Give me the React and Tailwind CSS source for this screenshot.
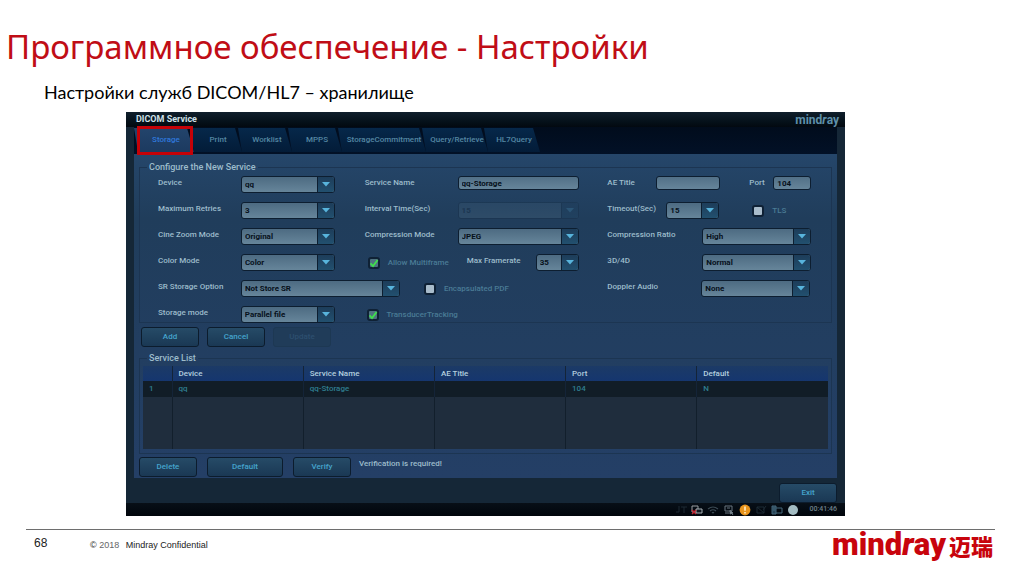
import { useState } from 'react';
import clsx from 'clsx';

const tabs = [
  { name: 'Storage', width: 'w-[60px]' },
  { name: 'Print', width: 'w-[52px]' },
  { name: 'Worklist', width: 'w-[54px]' },
  { name: 'MPPS', width: 'w-[54px]' },
  { name: 'StorageCommitment', width: 'w-[88px]' },
  { name: 'Query/Retrieve', width: 'w-[66px]' },
  { name: 'HL7Query', width: 'w-[56px]' },
];

const services = [{ device: 'qq', name: 'qq-Storage', ae: '', port: '104', isDefault: 'N' }];

const App = () => (
  <div className="flex min-h-screen flex-col bg-white">
    <header className="pt-6 font-['Noto_Sans',sans-serif]">
      <h1 className="pl-[6px] text-[33px] leading-[46px] text-[#c00d16]">Программное обеспечение - Настройки</h1>
      <p className="pl-11 pt-2 font-['Lato','Open_Sans',sans-serif] text-[18px] leading-7 text-black">
        Настройки служб DICOM/HL7 – хранилище
      </p>
    </header>
    <main className="ml-[126px] mr-[179px] mt-[6px]">
      <DicomService />
    </main>
    <Footer />
  </div>
);

const DicomService = () => {
  const [active, setActive] = useState('Storage');

  return (
    <section className="bg-[#152737] font-['Roboto',sans-serif] text-[8px] font-medium text-[#9dbccb]">
      <div className="flex h-[15px] items-center justify-between bg-linear-to-b from-[#101f2c] to-[#020910] pl-[10px] pr-[6px]">
        <h2 className="text-[9px] font-bold text-[#cfe0e8]">DICOM Service</h2>
        <span className="text-[12px] font-bold leading-[12px] text-[#5f90aa]">
          mind<i>r</i>ay
        </span>
      </div>

      <div className="mx-2">
        <div className="relative flex h-[27px] bg-linear-to-b from-[#010c1c] to-[#021127] pt-px" role="tablist">
          {tabs.map((tab) => (
            <button
              key={tab.name}
              type="button"
              role="tab"
              aria-selected={tab.name === active}
              onClick={() => setActive(tab.name)}
              className={clsx(
                '-mr-1 h-[24px] shrink-0 whitespace-nowrap pl-1 [clip-path:polygon(0_0,calc(100%-7px)_0,100%_100%,4px_100%)]',
                tab.width,
                tab.name === active
                  ? 'bg-linear-to-b from-[#23446c] to-[#1c3a60] text-[#2f78dc]'
                  : 'bg-linear-to-b from-[#06284a] to-[#031c38] text-[#5487a3]'
              )}
            >
              {tab.name}
            </button>
          ))}
          <div className="pointer-events-none absolute -top-px left-[3px] h-[29px] w-[56px] border-[3px] border-[#c40208]" />
        </div>

        <div className="h-[324px] bg-linear-to-b from-[#25466a] via-[#203d5b] via-20% to-[#243f66] px-[5px] pt-[7px]">
          <ConfigForm />
          <div className="mt-1 flex gap-2 pl-[2px]">
            <Button>Add</Button>
            <Button>Cancel</Button>
            <Button disabled>Update</Button>
          </div>
          <ServiceList />
          <div className="mt-[3px] flex gap-[10px]">
            <Button>Delete</Button>
            <Button wide>Default</Button>
            <Button>Verify</Button>
            <p className="-ml-[2px] leading-[14px]">Verification is required!</p>
          </div>
        </div>

        <div className="flex h-[25px] items-center justify-end pt-1">
          <Button>Exit</Button>
        </div>
      </div>
      <StatusBar />
    </section>
  );
};

const row = 'grid h-[26px] grid-cols-[83fr_124fr_93fr_150fr_224fr] items-start';

const ConfigForm = () => (
  <fieldset className="h-[162px] border border-[#1c3552] pl-[18px] pt-[3px]">
    <legend className="-ml-[11px] px-[2px] text-[9px] leading-[12px]">Configure the New Service</legend>
    <div className={row}>
      <Label htmlFor="device">Device</Label>
      <Select id="device" value="qq" width="w-[94px]" />
      <Label htmlFor="service">Service Name</Label>
      <TextBox id="service" value="qq-Storage" width="w-[121px]" />
      <div className="flex">
        <Label htmlFor="ae" width="w-[49px]">AE Title</Label>
        <TextBox id="ae" value="" width="w-[64px]" />
        <Label htmlFor="port" width="ml-[29px] w-[24px]">Port</Label>
        <TextBox id="port" value="104" width="w-[38px]" />
      </div>
    </div>
    <div className={row}>
      <Label htmlFor="retries">Maximum Retries</Label>
      <Select id="retries" value="3" width="w-[94px]" />
      <Label htmlFor="interval">Interval Time(Sec)</Label>
      <Select id="interval" value="15" width="w-[121px]" disabled />
      <div className="flex">
        <Label htmlFor="timeout" width="w-[59px]">Timeout(Sec)</Label>
        <Select id="timeout" value="15" width="w-[53px]" />
        <Check id="tls" label="TLS" className="ml-[33px]" />
      </div>
    </div>
    <div className={row}>
      <Label htmlFor="cine">Cine Zoom Mode</Label>
      <Select id="cine" value="Original" width="w-[94px]" />
      <Label htmlFor="compression">Compression Mode</Label>
      <Select id="compression" value="JPEG" width="w-[121px]" />
      <div className="flex">
        <Label htmlFor="ratio" width="w-[95px]">Compression Ratio</Label>
        <Select id="ratio" value="High" width="w-[109px]" />
      </div>
    </div>
    <div className={row}>
      <Label htmlFor="color">Color Mode</Label>
      <Select id="color" value="Color" width="w-[94px]" />
      <div className="col-span-2 flex">
        <Check id="multiframe" label="Allow Multiframe" className="ml-[3px] w-[99px]" checked />
        <Label htmlFor="framerate" width="w-[69px]">Max Framerate</Label>
        <Select id="framerate" value="35" width="w-[43px]" />
      </div>
      <div className="flex">
        <Label htmlFor="mode3d" width="w-[95px]">3D/4D</Label>
        <Select id="mode3d" value="Normal" width="w-[109px]" />
      </div>
    </div>
    <div className={row}>
      <Label htmlFor="sr">SR Storage Option</Label>
      <div className="col-span-3 flex">
        <Select id="sr" value="Not Store SR" width="w-[159px]" />
        <Check id="pdf" label="Encapsulated PDF" className="ml-[24px]" />
      </div>
      <div className="flex">
        <Label htmlFor="doppler" width="w-[94px]">Doppler Audio</Label>
        <Select id="doppler" value="None" width="w-[109px]" />
      </div>
    </div>
    <div className={row}>
      <Label htmlFor="mode">Storage mode</Label>
      <Select id="mode" value="Parallel file" width="w-[94px]" />
      <Check id="tracking" label="TransducerTracking" className="ml-[2px]" checked />
    </div>
  </fieldset>
);

const Label = ({ htmlFor, width = '', children }) => (
  <label htmlFor={htmlFor} className={clsx('shrink-0 whitespace-nowrap leading-[13px]', width)}>
    {children}
  </label>
);

const TextBox = ({ id, value, width }) => (
  <input
    id={id}
    defaultValue={value}
    className={clsx(
      'h-[14px] rounded-[3px] border border-[#0d1e30] bg-linear-to-b from-[#527087] to-[#66859a] px-[3px] text-[8px] font-bold leading-[12px] text-[#07111b]',
      width
    )}
  />
);

const Select = ({ id, value, width, disabled = false }) => (
  <div className={clsx('relative h-[17px] shrink-0', width, disabled && 'opacity-20')}>
    <select
      id={id}
      disabled={disabled}
      className="block h-full w-full appearance-none rounded-[3px] border border-[#0d1e30] bg-linear-to-b from-[#4d6b82] to-[#66859a] pl-[3px] pr-[18px] text-[8px] font-bold text-[#07111b]"
    >
      <option>{value}</option>
    </select>
    <span className="pointer-events-none absolute inset-y-px right-px flex w-[17px] items-center justify-center rounded-r-[2px] border-l border-[#0d1e30] bg-linear-to-b from-[#1d3d5a] to-[#22506f]">
      <svg viewBox="0 0 8 5" className="h-[5px] w-[8px]" fill="#58b4dc">
        <path d="M0 0h8L4 4.6z" />
      </svg>
    </span>
  </div>
);

const Check = ({ id, label, className, checked = false }) => {
  const [on, setOn] = useState(checked);
  return (
    <div className={clsx('flex h-[17px] shrink-0 items-center gap-2 whitespace-nowrap text-[#4a7b95]', className)}>
      <span className="relative flex">
        <input
          id={id}
          type="checkbox"
          checked={on}
          onChange={() => setOn(!on)}
          className="h-[12px] w-[12px] appearance-none rounded-[3px] border-2 border-[#0f2135] bg-[#a9bccb] checked:bg-[#4f7280]"
        />
        {on && (
          <svg viewBox="0 0 12 12" className="pointer-events-none absolute inset-0" fill="none" stroke="#3fe04d" strokeWidth="1.8">
            <path d="M2.5 6.3 5 9l4.6-6" />
          </svg>
        )}
      </span>
      <label htmlFor={id}>{label}</label>
    </div>
  );
};

const Button = ({ children, wide = false, disabled = false }) => (
  <button
    type="button"
    disabled={disabled}
    className={clsx(
      'h-[20px] shrink-0 rounded-[3px] border text-[8px]',
      wide ? 'w-[76px]' : 'w-[58px]',
      disabled
        ? 'border-[#1d3853] bg-[#203c59] text-[#2d4f6f]'
        : 'border-[#0c1c2d] bg-linear-to-b from-[#264b67] to-[#1a3854] text-[#45a5cd]'
    )}
  >
    {children}
  </button>
);

const ServiceList = () => (
  <fieldset className="mt-[5px] h-[102px] border border-[#1c3552] px-[3px] pt-[2px]">
    <legend className="ml-1 px-[2px] text-[9px] leading-[12px]">Service List</legend>
    <table className="h-[83px] w-full table-fixed border-collapse bg-[#1f2d3d] text-left">
      <colgroup>
        <col className="w-[29px]" />
        <col />
        <col />
        <col />
        <col />
        <col />
      </colgroup>
      <thead className="bg-linear-to-b from-[#1c3a66] to-[#15366f] text-[#b3cfdf]">
        <tr className="h-[15px]">
          <th />
          {['Device', 'Service Name', 'AE Title', 'Port', 'Default'].map((head) => (
            <th key={head} className="border-l border-[#142438] p-0 pl-[6px] font-medium">{head}</th>
          ))}
        </tr>
      </thead>
      <tbody>
        {services.map((service, index) => (
          <tr key={service.name} className="h-[16px] bg-[#111d27] text-[#2f7d90]">
            <td className="p-0 pl-[6px]">{index + 1}</td>
            {Object.entries(service).map(([key, value]) => (
              <td key={key} className="border-l border-[#142438] p-0 pl-[6px]">{value}</td>
            ))}
          </tr>
        ))}
        <tr>
          <td />
          {Object.keys(services[0]).map((key) => (
            <td key={key} className="border-l border-[#121f2c]" />
          ))}
        </tr>
      </tbody>
    </table>
  </fieldset>
);

const StatusBar = () => (
  <div className="flex h-[13px] items-center justify-end gap-1 bg-linear-to-b from-[#080f17] to-[#01060c] pr-2 text-[#3c4d59]">
    <svg viewBox="0 0 12 12" className="size-3" fill="none" stroke="#1c2933">
      <path d="M4 2v6H1M6 3h6M9 3v6" />
    </svg>
    <svg viewBox="0 0 12 12" className="size-3" fill="none">
      <path d="M1 2h6v6H1z" stroke="#9a9fa3" />
      <path d="M5 5h6v4H5z" fill="#101820" stroke="#a8b0b4" />
      <path d="m1 6 4 4M5 6l-4 4" stroke="#c42530" strokeWidth="1.4" />
    </svg>
    <svg viewBox="0 0 12 12" className="size-3" fill="none" stroke="#3c4a54" strokeWidth="1.2">
      <path d="M1 5q5-4 10 0M3 7q3-2.5 6 0M5 9q1-1 2 0" />
    </svg>
    <svg viewBox="0 0 12 12" className="size-3" fill="none" stroke="#68757e">
      <path d="M2 2h7v5H2zM4 4h3M2 9h4" />
      <path d="m7 7 3 4M7 10V6l3 3z" fill="#9ba5ab" />
    </svg>
    <svg viewBox="0 0 12 12" className="size-3">
      <circle cx="6" cy="6" r="5.4" fill="#e8941c" />
      <path d="M6 2.5v4.3M6 8v1.6" stroke="#fff1cc" strokeWidth="1.5" />
    </svg>
    <svg viewBox="0 0 12 12" className="size-3" fill="none" stroke="#1d2a34">
      <path d="M2 3h7v6H2zM2 3l7 6M11 2 8 6" />
    </svg>
    <svg viewBox="0 0 12 12" className="size-3" fill="none" stroke="#47687c">
      <path d="M1 2h4v8H1z" fill="#294658" />
      <path d="M5 4h6v5H5M2 4h2M2 6h2" />
    </svg>
    <svg viewBox="0 0 12 12" className="size-3">
      <circle cx="6" cy="6" r="5" fill="#a3bcc3" />
    </svg>
    <time className="ml-[6px] text-[7px] text-[#6f818b]">00:41:46</time>
  </div>
);

const Footer = () => (
  <footer className="ml-[26px] mr-[29px] mt-[13px] flex items-start border-t border-[#6e6e6e] font-['Liberation_Sans',sans-serif] text-[#222]">
    <span className="w-16 pl-2 pt-[6px] text-[12px] leading-[15px]">68</span>
    <p className="pt-[9px] text-[9px] leading-[12px]">
      © <span className="mr-1 text-[#666]">2018</span> Mindray Confidential
    </p>
    <div className="ml-auto flex gap-[3px] pr-[2px] font-['Roboto',sans-serif] text-[#c8040c]">
      <span className="text-[31px] font-black leading-[30px]">
        mind<i>r</i>ay
      </span>
      <span className="font-['Noto_Sans_CJK_SC',sans-serif] text-[22px] font-black leading-[30px]">迈瑞</span>
    </div>
  </footer>
);

export default App;
